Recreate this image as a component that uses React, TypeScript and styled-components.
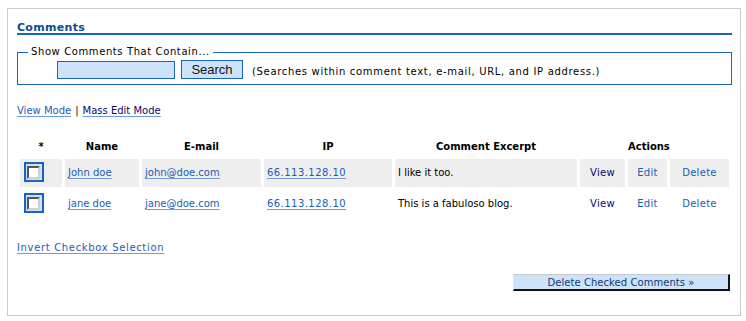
import React from "react";
import styled, { createGlobalStyle } from "styled-components";

const GlobalStyle = createGlobalStyle`
  * { box-sizing: border-box; }
  body {
    margin: 0;
    background: #fff;
    font-family: "DejaVu Sans", Verdana, sans-serif;
    font-size: 10px;
    color: #000;
  }
`;

const Panel = styled.div`
  margin: 8px 0 0 7px;
  width: 734px;
  height: 308px;
  border: 1px solid #cccccc;
  padding: 0 8px 0 9px;
`;

const Heading = styled.h2`
  margin: 12px 0 0;
  padding-top: 1px;
  font-size: 11px;
  line-height: 11px;
  font-weight: bold;
  letter-spacing: 0.3px;
  color: #0e4c91;
  border-bottom: 2px solid #1a64c0;
`;

const Fieldset = styled.fieldset`
  margin: 11px 0 0;
  border: 1px solid #1a64c0;
  padding: 2px 0 5px 10px;
  min-width: 0;
`;

const Legend = styled.legend`
  padding: 0 3px;
  font-size: 10px;
  line-height: 12px;
  letter-spacing: 0.6px;
`;

const SearchRow = styled.div`
  display: flex;
  align-items: flex-start;
  height: 19px;
  padding-left: 29px;
`;

const SearchInput = styled.input`
  width: 118px;
  height: 18px;
  margin: 1px 6px 0 0;
  border: 1px solid #1a64c0;
  background: #cde3fb;
  padding: 0 2px;
  font: 10px "DejaVu Sans", sans-serif;
  outline: none;
`;

const SearchButton = styled.button`
  width: 62px;
  height: 19px;
  margin: 0 9px 0 0;
  padding: 0;
  border: 1px solid #1a64c0;
  background: #cde3fb;
  font: 13px/17px "Liberation Sans", Arial, sans-serif;
  color: #111;
  cursor: pointer;
`;

const Hint = styled.span`
  margin-top: 6px;
  line-height: 12px;
  letter-spacing: 0.68px;
`;

const ModeLine = styled.div`
  margin-top: 20px;
  line-height: 12px;
`;

const Link = styled.a<{ $visited?: boolean; $spacing?: number }>`
  color: ${(p) => (p.$visited ? "#0a0a66" : "#1a5cb8")};
  text-decoration: underline;
  text-decoration-color: #6d9ddc;
  text-underline-offset: 2px;
  letter-spacing: ${(p) => p.$spacing ?? 0}px;
  cursor: pointer;
`;

const Sep = styled.span`
  margin: 0 4px;
`;

const Table = styled.table`
  margin-top: 18px;
  width: 715px;
  border-spacing: 3px;
  table-layout: fixed;
`;

const Th = styled.th<{ $w: number }>`
  width: ${(p) => p.$w}px;
  padding: 3px 0;
  line-height: 12px;
  font-size: 10px;
  font-weight: bold;
  text-align: center;
`;

const Tr = styled.tr<{ $shade?: boolean }>`
  background: ${(p) => (p.$shade ? "#eeeeee" : "transparent")};
`;

const Td = styled.td<{ $center?: boolean }>`
  height: 28px;
  padding: 0 3px;
  vertical-align: middle;
  text-align: ${(p) => (p.$center ? "center" : "left")};
  line-height: 12px;
  white-space: nowrap;
  overflow: hidden;
`;

const CheckCell = styled.td`
  height: 28px;
  padding: 3px 0 0 4px;
  vertical-align: top;
`;

const CheckFrame = styled.span`
  display: block;
  width: 20px;
  height: 20px;
  border: 2px solid #1a64c0;
  background: #cde3fb;
  padding: 2px 0 0 1px;
`;

const CheckInner = styled.span`
  display: block;
  width: 13px;
  height: 13px;
  background: #fff;
  border-style: solid;
  border-width: 2px;
  border-color: #555 #d4d0c8 #d4d0c8 #555;
`;

const ActionLink = styled.a<{ $dark?: boolean }>`
  color: ${(p) => (p.$dark ? "#0a0a66" : "#1a5cb8")};
  text-decoration: none;
  letter-spacing: 0.3px;
  cursor: pointer;
`;

const InvertLine = styled.div`
  margin-top: 21px;
  line-height: 12px;
`;

const Footer = styled.div`
  display: flex;
  justify-content: flex-end;
  margin-top: 20px;
  padding-right: 2px;
`;

const DeleteButton = styled.button`
  width: 217px;
  height: 17px;
  padding: 0;
  background: #cde3fb;
  border-style: solid;
  border-width: 1px 2px 2px 1px;
  border-color: #c8c8c8 #111 #111 #d8e8fb;
  color: #0c3a75;
  font: 10px/13px "DejaVu Sans", Verdana, sans-serif;
  letter-spacing: 0.05px;
  cursor: pointer;
`;

const rows = [
  { name: "John doe", email: "john@doe.com", ip: "66.113.128.10", text: "I like it too." },
  { name: "jane doe", email: "jane@doe.com", ip: "66.113.128.10", text: "This is a fabuloso blog." },
];

export default function App() {
  return (
    <>
      <GlobalStyle />
      <Panel>
        <Heading>Comments</Heading>
        <Fieldset>
          <Legend>Show Comments That Contain...</Legend>
          <SearchRow>
            <SearchInput type="text" />
            <SearchButton type="button">Search</SearchButton>
            <Hint>(Searches within comment text, e-mail, URL, and IP address.)</Hint>
          </SearchRow>
        </Fieldset>
        <ModeLine>
          <Link>View Mode</Link>
          <Sep>|</Sep>
          <Link $visited>Mass Edit Mode</Link>
        </ModeLine>
        <Table>
          <thead>
            <tr>
              <Th $w={42}>*</Th>
              <Th $w={74}>Name</Th>
              <Th $w={119}>E-mail</Th>
              <Th $w={128}>IP</Th>
              <Th $w={182}>Comment Excerpt</Th>
              <Th $w={45}></Th>
              <Th $w={39}>Actions</Th>
              <Th $w={59}></Th>
            </tr>
          </thead>
          <tbody>
            {rows.map((r, i) => (
              <Tr key={i} $shade={i === 0}>
                <CheckCell>
                  <CheckFrame>
                    <CheckInner />
                  </CheckFrame>
                </CheckCell>
                <Td><Link>{r.name}</Link></Td>
                <Td><Link>{r.email}</Link></Td>
                <Td><Link $spacing={0.45}>{r.ip}</Link></Td>
                <Td>{r.text}</Td>
                <Td $center><ActionLink $dark>View</ActionLink></Td>
                <Td $center><ActionLink>Edit</ActionLink></Td>
                <Td $center><ActionLink>Delete</ActionLink></Td>
              </Tr>
            ))}
          </tbody>
        </Table>
        <InvertLine>
          <Link $spacing={0.66}>Invert Checkbox Selection</Link>
        </InvertLine>
        <Footer>
          <DeleteButton type="button">Delete Checked Comments »</DeleteButton>
        </Footer>
      </Panel>
    </>
  );
}
